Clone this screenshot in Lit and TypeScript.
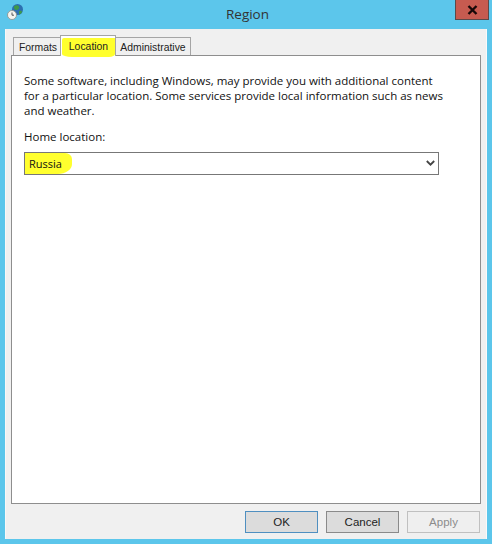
import { LitElement, html, css } from "lit";
import { customElement } from "lit/decorators.js";

@customElement("app-root")
export class AppRoot extends LitElement {
  static styles = css`
    :host { display: block; width: 492px; height: 544px; overflow: hidden; }
    * { box-sizing: border-box; }
    .window {
      width: 492px; height: 544px; background: #5cc6eb;
      padding: 0 5px 5px; display: flex; flex-direction: column;
      font-family: "Open Sans", "Noto Sans", sans-serif; font-size: 11.5px; color: #111;
    }
    .titlebar {
      height: 29px; flex: none; margin-right: -2px;
      display: grid; grid-template-columns: 1fr auto 1fr; align-items: start;
    }
    .app-icon { display: block; margin: 3px 0 0 1px; }
    .title { font-size: 13.5px; line-height: 20px; padding: 4px 0 0 1px; color: #333; }
    .close {
      justify-self: end; width: 34px; height: 20px; background: #c75b50;
      border: 1px solid #5c4a4a; border-top: none; display: flex; align-items: center; justify-content: center;
    }
    .client {
      flex: 1; background: #f0f0f0; padding: 7px 5px 0 5px;
      display: flex; flex-direction: column; border-right: 1px solid #fafafa; border-left: 1px solid #f8f8f8;
    }
    .tabs {
      display: flex; align-items: flex-end; padding-left: 2px; height: 20px; flex: none;
      position: relative; z-index: 1; margin-bottom: -1px;
      font-family: "Liberation Sans", Arial, sans-serif; font-size: 10.4px; color: #222;
    }
    .tab {
      border: 1px solid #a5a5a5; border-bottom: none; background: #f0f0f0;
      text-align: center; line-height: 16px; white-space: nowrap;
    }
    .tab.formats { width: 47px; margin-bottom: 1px; height: 18px; border-right: none; padding: 2px 0 0 2px; }
    .tab.location { width: 56px; height: 21px; background: #fff; padding-top: 1px; }
    .tab.admin { width: 75px; margin-bottom: 1px; height: 18px; border-left: none; padding: 2px 0 0 0; }
    .tab .mark {
      display: block; background: #ffff2e; height: 19px; margin: 1px 0 0 1px; line-height: 17px;
      border-radius: 2px 0 6px 10px / 2px 0 3px 3px;
    }
    .panel {
      flex: 1; background: #fff; border: 1px solid #8e8e8e; padding: 17px 12px 0; min-height: 0;
    }
    .desc { margin: 0; line-height: 15px; width: 420px; }
    .label { margin: 11px 0 0; line-height: 15px; }
    .combo {
      margin-top: 8px; width: 415px; height: 23px; border: 1px solid #777; background: #fff;
      display: flex; align-items: center; justify-content: space-between; padding-right: 3px;
    }
    .russia {
      background: #ffff2e; height: 21px; width: 47px; line-height: 21px; padding-left: 4px; font-size: 11px;
      border-radius: 0 7px 14px 0 / 0 6px 10px 0;
    }
    .footer {
      height: 35px; flex: none; display: flex; gap: 8px; padding: 7px 0 0 234px;
      font-family: "Liberation Sans", Arial, sans-serif; font-size: 11.5px; color: #222;
    }
    .btn {
      width: 73px; height: 22px; border: 1px solid #8a8a8a; background: #dcdcdc;
      display: flex; align-items: center; justify-content: center;
    }
    .btn.ok { border-color: #4f8fc0; }
    .btn.apply { border-color: #c0c0c0; background: #efefef; color: #8b8b8b; }
  `;

  render() {
    return html`
      <div class="window">
        <div class="titlebar">
          <svg class="app-icon" width="18" height="18" viewBox="0 0 18 18">
            <circle cx="11.500" cy="6.500" r="5.500" fill="#2c6fb0"/>
            <path d="M8 3.500c2-2 4-1.500 5 0 .5 1.500-.5 3-2 3.500-2 .5-3.500-1.500-3-3.500z" fill="#3f9a4a"/>
            <path d="M13 8c1.500-.5 3 0 3 1-.5 1.500-2 2.500-3 2.500z" fill="#3f9a4a"/>
            <circle cx="6" cy="12" r="4.500" fill="#f4f4f0" stroke="#8d8d85" stroke-width=".8"/>
            <path d="M6 9.500v2.700h2" fill="none" stroke="#444" stroke-width=".9"/>
          </svg>
          <div class="title">Region</div>
          <div class="close">
            <svg width="11" height="10" viewBox="0 0 11 10">
              <path d="M1.500 1l8 8M9.500 1l-8 8" stroke="#180808" stroke-width="2.400" fill="none"/>
            </svg>
          </div>
        </div>
        <div class="client">
          <div class="tabs">
            <div class="tab formats">Formats</div>
            <div class="tab location"><span class="mark">Location</span></div>
            <div class="tab admin">Administrative</div>
          </div>
          <div class="panel">
            <p class="desc">Some software, including Windows, may provide you with additional content for a particular location. Some services provide local information such as news and weather.</p>
            <p class="label">Home location:</p>
            <div class="combo">
              <div class="russia">Russia</div>
              <svg width="9" height="7" viewBox="0 0 9 7">
                <path d="M.8 1l3.700 3.700L8.200 1" fill="none" stroke="#444" stroke-width="1.800"/>
              </svg>
            </div>
          </div>
          <div class="footer">
            <div class="btn ok">OK</div>
            <div class="btn">Cancel</div>
            <div class="btn apply">Apply</div>
          </div>
        </div>
      </div>
    `;
  }
}
